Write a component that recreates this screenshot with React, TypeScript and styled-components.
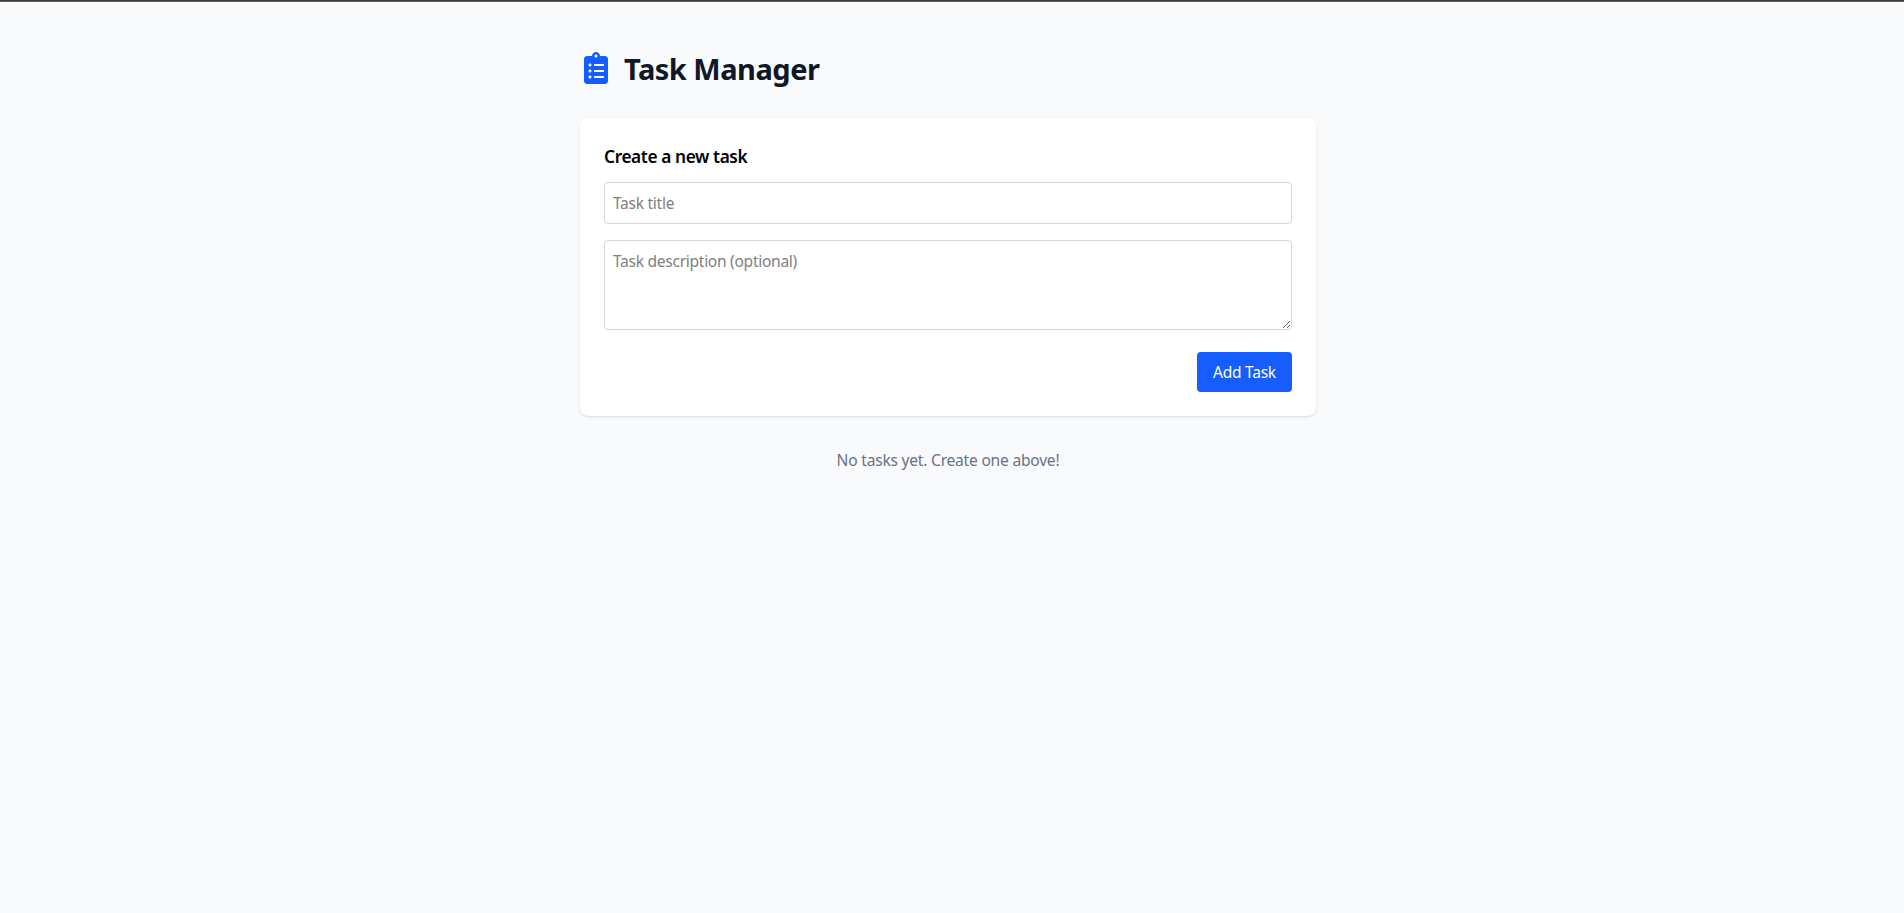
import React from "react";
import styled, { createGlobalStyle } from "styled-components";
import { FaClipboardList } from "react-icons/fa";

const GlobalStyle = createGlobalStyle`
  *, *::before, *::after { box-sizing: border-box; }
  body {
    margin: 0;
    background: #f9fafb;
    color: #000;
    font-family: "Segoe UI", "Noto Sans", sans-serif;
    font-size: 15.6px;
    line-height: 24px;
  }
  h1, h2, p { margin: 0; }
  input, textarea, button { font: inherit; }
`;

const Page = styled.div`
  min-height: 100vh;
  border-top: 1px solid #3c3c3c;
  box-shadow: inset 0 1px #5c5c5c;
  padding: 47px 8px 0 0;
`;

const Container = styled.main`
  width: 736px;
  margin: 0 auto;
`;

const Header = styled.header`
  display: flex;
  align-items: center;
  gap: 12px;
  height: 40px;
  margin-bottom: 30px;
`;

const HeaderIcon = styled(FaClipboardList)`
  width: 32px;
  height: 32px;
  color: #155dfc;
`;

const Title = styled.h1`
  padding-top: 2px;
  font-size: 29px;
  line-height: 40px;
  font-weight: 700;
  letter-spacing: -0.5px;
  color: #101828;
`;

const Card = styled.form`
  background: #fff;
  border-radius: 8px;
  box-shadow: 0 1px 3px rgba(0, 0, 0, 0.1), 0 1px 2px -1px rgba(0, 0, 0, 0.1);
  padding: 24px;
`;

const CardTitle = styled.h2`
  padding-top: 1px;
  font-size: 17.3px;
  line-height: 28px;
  font-weight: 600;
  letter-spacing: -0.4px;
  margin-bottom: 11px;
`;

const Input = styled.input`
  display: block;
  width: 100%;
  height: 42px;
  padding: 8px;
  border: 1px solid #d1d5dc;
  border-radius: 4px;
  margin-bottom: 16px;
  letter-spacing: -0.3px;

  &::placeholder { color: #808080; }
`;

const TextArea = styled.textarea`
  display: block;
  width: 100%;
  height: 90px;
  padding: 8px;
  border: 1px solid #d1d5dc;
  border-radius: 4px;
  letter-spacing: -0.3px;

  &::placeholder { color: #808080; }
`;

const Actions = styled.div`
  display: flex;
  justify-content: flex-end;
  margin-top: 22px;
`;

const Button = styled.button`
  height: 40px;
  width: 95px;
  padding: 0;
  border: 0;
  border-radius: 4px;
  background: #155dfc;
  color: #fff;
  letter-spacing: -0.3px;
`;

const Empty = styled.p`
  margin-top: 32px;
  text-align: center;
  letter-spacing: -0.23px;
  color: #6a7282;
`;

export default function App() {
  return (
    <Page>
      <GlobalStyle />
      <Container>
        <Header>
          <HeaderIcon />
          <Title>Task Manager</Title>
        </Header>
        <Card>
          <CardTitle>Create a new task</CardTitle>
          <Input placeholder="Task title" />
          <TextArea placeholder="Task description (optional)" />
          <Actions>
            <Button type="button">Add Task</Button>
          </Actions>
        </Card>
        <Empty>No tasks yet. Create one above!</Empty>
      </Container>
    </Page>
  );
}
